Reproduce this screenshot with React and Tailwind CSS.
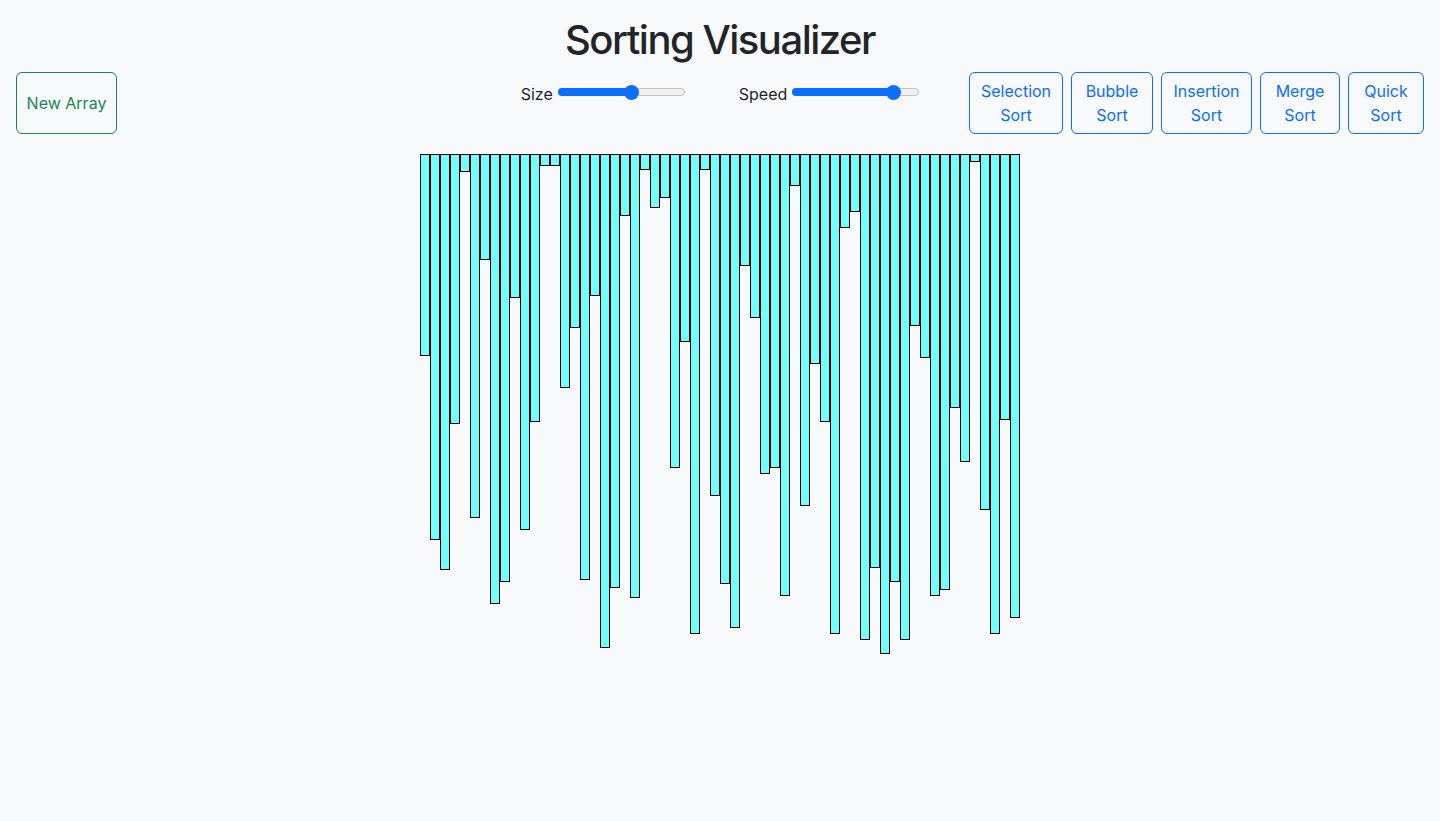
import React from "react";

const BAR_HEIGHTS = [
  202, 386, 416, 270, 18, 364, 106, 450, 428, 144, 376, 268, 12, 12, 234,
  174, 426, 142, 494, 434, 62, 444, 16, 54, 44, 314, 188, 480, 16, 342, 430,
  474, 112, 164, 320, 314, 442, 32, 352, 210, 268, 480, 74, 58, 486, 414,
  500, 428, 486, 172, 204, 442, 436, 254, 308, 8, 356, 480, 266, 464,
];

const SORTS = [
  { first: "Selection", width: "w-[94px]" },
  { first: "Bubble", width: "w-[82px]" },
  { first: "Insertion", width: "w-[91px]" },
  { first: "Merge", width: "w-[80px]" },
  { first: "Quick", width: "w-[76px]" },
];

// track is 127px wide, thumb is 15px
const Slider = ({ label, value }) => {
  const thumbLeft = Math.round((127 - 15) * value);
  return (
    <div className="flex items-start gap-[5px]">
      <span className="text-[16px] leading-6 text-[#212529]">{label}</span>
      <div className="relative mt-[2px] h-4 w-[127px]">
        <div className="absolute left-0 right-0 top-[4px] h-[8px] rounded-full border border-[#c4c4c4] bg-[#efefef]" />
        <div
          className="absolute left-0 top-[4px] h-[8px] rounded-full bg-[#0d6efd]"
          style={{ width: thumbLeft + 8 }}
        />
        <div
          className="absolute top-[0.5px] h-[15px] w-[15px] rounded-full bg-[#0d6efd]"
          style={{ left: thumbLeft }}
        />
      </div>
    </div>
  );
};

const App = () => {
  return (
    <div className="min-h-screen bg-[#f8f9fa] font-['Inter',sans-serif] text-[#212529]">
      {/* TITLE */}
      <h1 className="pt-4 mb-2 text-center text-[40px] font-medium leading-[48px] tracking-[-1.5px]">
        Sorting Visualizer
      </h1>

      {/* CONTROLS */}
      <div className="grid grid-cols-3 px-4">
        <div className="flex">
          <button className="flex h-[62px] w-[101px] items-center justify-center rounded-md border border-[#198754] text-[16px] leading-6 text-[#198754]">
            New Array
          </button>
        </div>

        <div className="mt-[10px] flex justify-center gap-[54px]">
          <Slider label="Size" value={0.59} />
          <Slider label="Speed" value={0.84} />
        </div>

        <div className="flex justify-end gap-2">
          {SORTS.map((s) => (
            <button
              key={s.first}
              className={`h-[62px] ${s.width} rounded-md border border-[#0d6efd] py-[6px] text-center text-[16px] leading-6 text-[#0d6efd]`}
            >
              {s.first}
              <br />
              Sort
            </button>
          ))}
        </div>
      </div>

      {/* BARS */}
      <div className="mt-5 flex items-start justify-center">
        {BAR_HEIGHTS.map((h, i) => (
          <div
            key={i}
            className="w-[10px] border border-black bg-[#70fffb]"
            style={{ height: h }}
          />
        ))}
      </div>
    </div>
  );
};

export default App;
